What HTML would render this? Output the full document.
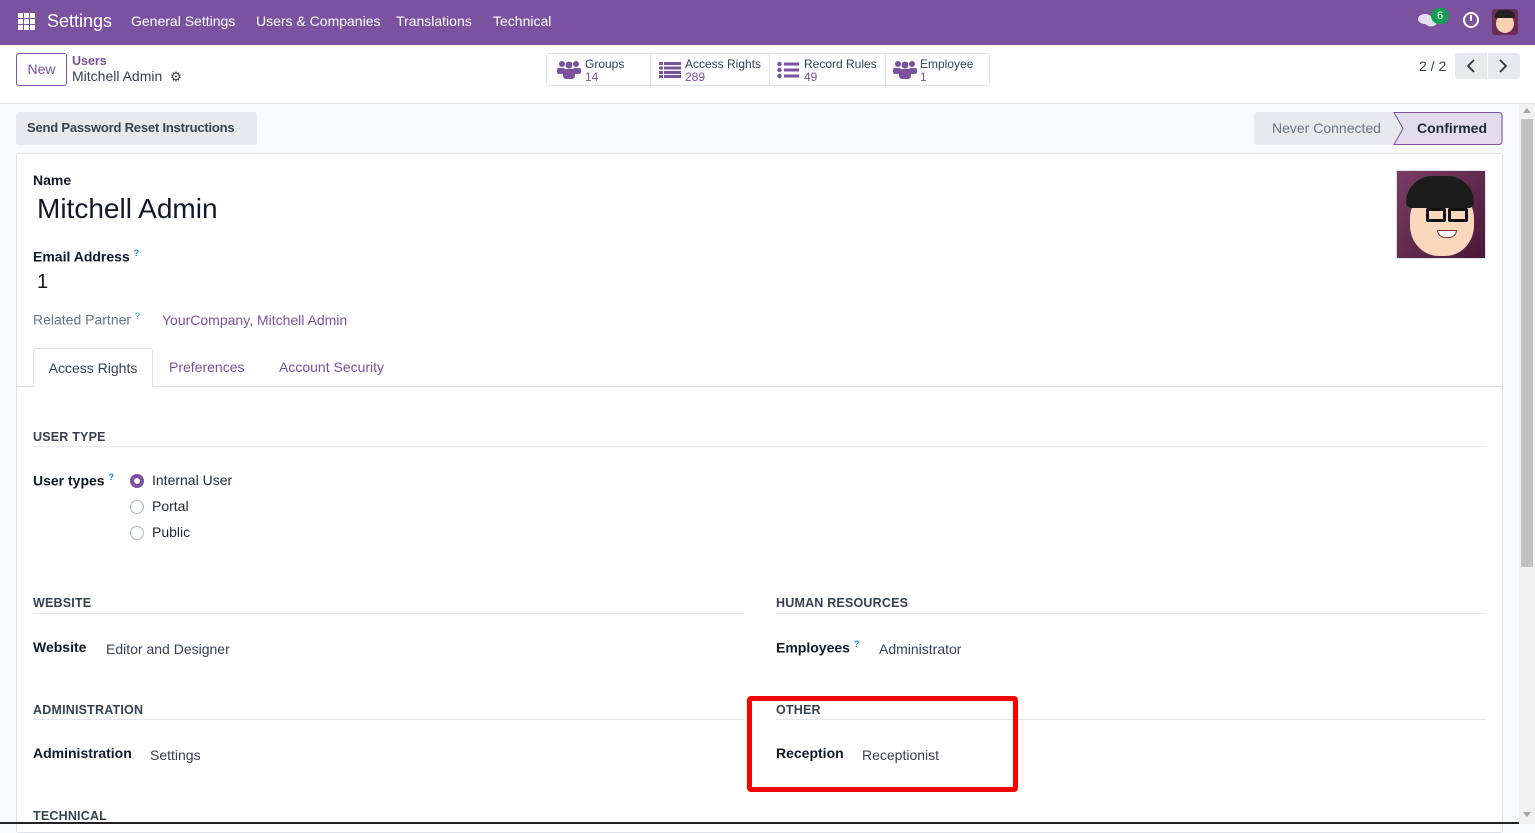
<!DOCTYPE html>
<html><head><meta charset="utf-8"><style>
*{box-sizing:border-box;margin:0;padding:0}
body{width:1535px;height:824px;overflow:hidden;font-family:"Liberation Sans",sans-serif;font-size:14px;color:#374151;background:#f9fafb;position:relative}
.a{position:absolute;white-space:nowrap}
.nav{left:0;top:0;width:1535px;height:45px;background:#7a52a0;color:#fff}
.nav span{position:absolute;top:13px;font-size:14px}
.cp{left:0;top:45px;width:1535px;height:59px;background:#fff;border-bottom:1px solid #dee2e6}
.btn{border:1px solid #dee2e6;border-radius:3px}
.sb{position:absolute;top:53px;height:33px;border:1px solid #dee2e6;background:#fff}
.sb .t{position:absolute;top:3px;font-size:12px;color:#374151;white-space:nowrap}
.sb .n{position:absolute;top:16px;font-size:12px;color:#7a52a0}
.card{left:16px;top:153px;width:1487px;height:680px;background:#fff;border:1px solid #dee2e6;border-radius:3px}
.h{font-weight:bold;font-size:12.5px;color:#374151;letter-spacing:.2px}
.line{height:1px;background:#e5e7eb}
.lbl{font-weight:bold;color:#111827;font-size:14px}
.val{color:#374151;font-size:14px}
.radio{width:14px;height:14px;border:1px solid #adb5bd;border-radius:50%;background:#fff}
</style></head><body>
<div class="a nav">
 <svg class="a" style="left:18px;top:13px" width="17" height="17" viewBox="0 0 17 17" fill="#fff"><rect x="0" y="0" width="5" height="5"/><rect x="6" y="0" width="5" height="5"/><rect x="12" y="0" width="5" height="5"/><rect x="0" y="6" width="5" height="5"/><rect x="6" y="6" width="5" height="5"/><rect x="12" y="6" width="5" height="5"/><rect x="0" y="12" width="5" height="5"/><rect x="6" y="12" width="5" height="5"/><rect x="12" y="12" width="5" height="5"/></svg>
 <span style="left:47px;top:11px;font-size:18px">Settings</span>
 <span style="left:131px">General Settings</span>
 <span style="left:256px">Users &amp; Companies</span>
 <span style="left:396px">Translations</span>
 <span style="left:493px">Technical</span>
 <svg class="a" style="left:1418px;top:13px" width="20" height="16" viewBox="0 0 20 16" fill="#e8e0f0"><ellipse cx="7" cy="6" rx="7" ry="5"/><ellipse cx="13" cy="9" rx="6" ry="4.5"/></svg>
 <div class="a" style="left:1431px;top:8px;width:18px;height:16px;border-radius:8px;background:#12a150;color:#fff;font-size:11px;text-align:center;line-height:16px">6</div>
 <div class="a" style="left:1463px;top:12px;width:16px;height:16px;border:2px solid #fff;border-radius:50%"></div>
 <div class="a" style="left:1470px;top:15px;width:2px;height:6px;background:#fff"></div>
 <div class="a" style="left:1492px;top:9px;width:26px;height:26px;border-radius:3px;background:#6b2c54"></div>
 <div class="a" style="left:1496px;top:14px;width:18px;height:19px;border-radius:50%;background:#f6d2b3"></div>
 <div class="a" style="left:1495px;top:10px;width:20px;height:8px;border-radius:8px 8px 2px 2px;background:#222"></div>
</div>
<div class="a cp"></div>
<div class="a btn" style="left:16px;top:53px;width:51px;height:33px;border-color:#7a52a0;color:#7a52a0;font-size:14px;text-align:center;line-height:31px;background:#fff">New</div>
<div class="a" style="left:72px;top:54px;font-size:12.5px;color:#7a52a0;font-weight:bold">Users</div>
<div class="a" style="left:72px;top:68px;font-size:14px;color:#374151">Mitchell Admin <span style="font-size:13px;color:#333;margin-left:4px">⚙</span></div>
<div class="sb" style="left:546px;width:105px;border-radius:3px 0 0 3px"><svg class="a" style="left:10px;top:6px" width="24" height="20" viewBox="0 0 24 20" fill="#7a52a0"><circle cx="5" cy="4" r="3"/><circle cx="19" cy="4" r="3"/><circle cx="12" cy="5" r="3.5"/><rect x="0" y="8" width="8" height="6" rx="2"/><rect x="16" y="8" width="8" height="6" rx="2"/><rect x="6" y="9" width="12" height="10" rx="3"/></svg><div class="t" style="left:38px">Groups</div><div class="n" style="left:38px">14</div></div>
<div class="sb" style="left:650px;width:120px"><svg class="a" style="left:8px;top:8px" width="22" height="16" viewBox="0 0 22 16" fill="#7a52a0"><rect x="0" y="0" width="4" height="3"/><rect x="5" y="0" width="17" height="3"/><rect x="0" y="4.5" width="4" height="3"/><rect x="5" y="4.5" width="17" height="3"/><rect x="0" y="9" width="4" height="3"/><rect x="5" y="9" width="17" height="3"/><rect x="0" y="13" width="4" height="3"/><rect x="5" y="13" width="17" height="3"/></svg><div class="t" style="left:34px">Access Rights</div><div class="n" style="left:34px">289</div></div>
<div class="sb" style="left:769px;width:117px"><svg class="a" style="left:7px;top:7px" width="22" height="18" viewBox="0 0 22 18" fill="#7a52a0"><circle cx="2.5" cy="3" r="2.2"/><circle cx="2.5" cy="9" r="2.2"/><circle cx="2.5" cy="15" r="2.2"/><rect x="7" y="1.5" width="15" height="3"/><rect x="7" y="7.5" width="15" height="3"/><rect x="7" y="13.5" width="15" height="3"/></svg><div class="t" style="left:34px">Record Rules</div><div class="n" style="left:34px">49</div></div>
<div class="sb" style="left:885px;width:105px;border-radius:0 3px 3px 0"><svg class="a" style="left:7px;top:6px" width="24" height="20" viewBox="0 0 24 20" fill="#7a52a0"><circle cx="5" cy="4" r="3"/><circle cx="19" cy="4" r="3"/><circle cx="12" cy="5" r="3.5"/><rect x="0" y="8" width="8" height="6" rx="2"/><rect x="16" y="8" width="8" height="6" rx="2"/><rect x="6" y="9" width="12" height="10" rx="3"/></svg><div class="t" style="left:34px">Employee</div><div class="n" style="left:34px">1</div></div>
<div class="a" style="left:1419px;top:58px;font-size:14px;color:#374151">2 / 2</div>
<div class="a" style="left:1455px;top:53px;width:65px;height:26px;background:#e7e9ed;border-radius:3px"></div>
<div class="a" style="left:1487px;top:53px;width:1px;height:26px;background:#fff"></div>
<svg class="a" style="left:1466px;top:59px" width="10" height="14"><path d="M8 1 L2 7 L8 13" fill="none" stroke="#333" stroke-width="1.8"/></svg>
<svg class="a" style="left:1498px;top:59px" width="10" height="14"><path d="M2 1 L8 7 L2 13" fill="none" stroke="#333" stroke-width="1.8"/></svg>
<div class="a" style="left:16px;top:112px;width:241px;height:33px;background:#e7e9ed;border-radius:3px;font-weight:bold;font-size:13px;letter-spacing:-0.2px;color:#374151;line-height:32px;padding-left:11px">Send Password Reset Instructions</div>
<div class="a" style="left:1254px;top:112px;width:249px;height:33px;background:#e7e9ed;border-radius:3px"></div>
<div class="a" style="left:1272px;top:120px;font-size:14px;color:#6b7280">Never Connected</div>
<svg class="a" style="left:1393px;top:112px" width="110" height="33"><path d="M1 0.5 H106 a3 3 0 0 1 3 3 V29.5 a3 3 0 0 1 -3 3 H1 L10 16.5 Z" fill="#e3dcec" stroke="#7a52a0"/></svg>
<div class="a" style="left:1417px;top:120px;font-size:14px;font-weight:bold;color:#1f2937">Confirmed</div>
<div class="a card"></div>
<div class="a lbl" style="left:33px;top:172px;font-size:14px">Name</div>
<div class="a" style="left:37px;top:193px;font-size:28px;color:#111827">Mitchell Admin</div>
<div class="a lbl" style="left:33px;top:248px">Email Address <sup style="color:#0d8bd0;font-size:9px">?</sup></div>
<div class="a" style="left:37px;top:271px;font-size:20px;color:#111827">1</div>
<div class="a" style="left:33px;top:311px;font-size:14px;color:#6b7280">Related Partner <sup style="color:#0d8bd0;font-size:9px">?</sup></div>
<div class="a" style="left:162px;top:312px;font-size:14px;color:#7a52a0">YourCompany, Mitchell Admin</div>
<div class="a" style="left:1396px;top:170px;width:90px;height:89px;border:1px solid #dee2e6;background:linear-gradient(135deg,#7a3d66,#4a1838)"></div>
<div class="a" style="left:1410px;top:188px;width:64px;height:68px;border-radius:45%;background:#f8d7bc"></div>
<div class="a" style="left:1406px;top:176px;width:68px;height:32px;border-radius:30px 30px 6px 6px;background:#1c1c1c"></div>
<div class="a" style="left:1426px;top:208px;width:20px;height:14px;border:3px solid #111;border-radius:2px"></div>
<div class="a" style="left:1448px;top:208px;width:20px;height:14px;border:3px solid #111;border-radius:2px"></div>
<div class="a" style="left:1437px;top:230px;width:20px;height:8px;border-radius:0 0 10px 10px;background:#fff;border:1px solid #733"></div>
<div class="a line" style="left:17px;top:386px;width:1485px;background:#dee2e6"></div>
<div class="a" style="left:33px;top:348px;width:120px;height:39px;background:#fff;border:1px solid #dee2e6;border-bottom:none;border-radius:3px 3px 0 0;font-size:14px;color:#374151;text-align:center;line-height:38px">Access Rights</div>
<div class="a" style="left:169px;top:359px;font-size:14px;color:#7a52a0">Preferences</div>
<div class="a" style="left:279px;top:359px;font-size:14px;color:#7a52a0">Account Security</div>
<div class="a h" style="left:33px;top:430px">USER TYPE</div>
<div class="a line" style="left:33px;top:446px;width:1453px"></div>
<div class="a lbl" style="left:33px;top:472px">User types <sup style="color:#0d8bd0;font-size:9px">?</sup></div>
<div class="a radio" style="left:130px;top:474px;border:4px solid #7a52a0"></div>
<div class="a radio" style="left:130px;top:500px"></div>
<div class="a radio" style="left:130px;top:526px"></div>
<div class="a val" style="left:152px;top:472px;color:#1f2937">Internal User</div>
<div class="a val" style="left:152px;top:498px;color:#1f2937">Portal</div>
<div class="a val" style="left:152px;top:524px;color:#1f2937">Public</div>
<div class="a h" style="left:33px;top:596px">WEBSITE</div>
<div class="a line" style="left:33px;top:613px;width:711px"></div>
<div class="a lbl" style="left:33px;top:639px">Website</div>
<div class="a val" style="left:106px;top:641px">Editor and Designer</div>
<div class="a h" style="left:776px;top:596px">HUMAN RESOURCES</div>
<div class="a line" style="left:776px;top:613px;width:710px"></div>
<div class="a lbl" style="left:776px;top:639px">Employees <sup style="color:#0d8bd0;font-size:9px">?</sup></div>
<div class="a val" style="left:879px;top:641px">Administrator</div>
<div class="a h" style="left:33px;top:703px">ADMINISTRATION</div>
<div class="a line" style="left:33px;top:719px;width:711px"></div>
<div class="a lbl" style="left:33px;top:745px">Administration</div>
<div class="a val" style="left:150px;top:747px">Settings</div>
<div class="a h" style="left:776px;top:703px">OTHER</div>
<div class="a line" style="left:776px;top:719px;width:710px"></div>
<div class="a lbl" style="left:776px;top:745px">Reception</div>
<div class="a val" style="left:862px;top:747px">Receptionist</div>
<div class="a" style="left:747px;top:696px;width:271px;height:96px;border:5px solid #ff0000;border-radius:4px"></div>
<div class="a h" style="left:33px;top:809px">TECHNICAL</div>
<div class="a" style="left:0;top:822px;width:1519px;height:2px;background:#222"></div>
<div class="a" style="left:1519px;top:104px;width:16px;height:720px;background:#f1f1f1"></div>
<div class="a" style="left:1521px;top:119px;width:12px;height:448px;background:#c1c1c1"></div>
<div class="a" style="left:1523px;top:108px;width:0;height:0;border-left:4px solid transparent;border-right:4px solid transparent;border-bottom:5px solid #a3a3a3"></div>
<div class="a" style="left:1523px;top:812px;width:0;height:0;border-left:4px solid transparent;border-right:4px solid transparent;border-top:5px solid #a3a3a3"></div>
</body></html>
